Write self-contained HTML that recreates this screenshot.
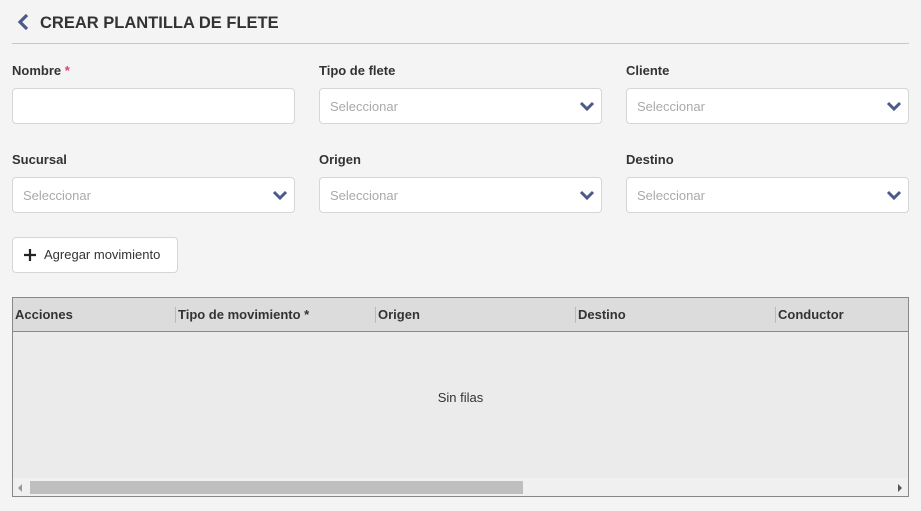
<!DOCTYPE html>
<html><head><style>
body{margin:0;width:921px;height:511px;background:#f4f4f4;font-family:"Liberation Sans",sans-serif;position:relative;overflow:hidden}
.a{position:absolute}
.t{left:40px;top:12px;font-size:16.5px;font-weight:bold;color:#333;line-height:22px}
.hr{left:12px;top:43px;width:897px;height:1px;background:#c8c8c8}
.lbl{font-size:13px;font-weight:bold;color:#333}
.in{background:#fff;border:1px solid #d6d6d6;border-radius:4px;height:34px;width:281px;box-sizing:content-box}
.in span{position:absolute;left:10px;top:10px;font-size:13px;color:#aaa}
.in svg{position:absolute;right:6px;top:11px}
.btn{left:12px;top:237px;width:164px;height:34px;background:#fff;border:1px solid #d6d6d6;border-radius:4px;font-size:13px;color:#333}
.tbl{left:12px;top:297px;width:895px;height:198px;border:1px solid #888;background:#ebebeb}
.th{left:0;top:0;width:895px;height:33px;background:#dcdcdc;border-bottom:1px solid #888}
.th div{position:absolute;top:9px;font-size:13px;font-weight:bold;color:#333;padding-left:2px;border-left:1px solid #bbb;height:16px;line-height:16px}
</style></head><body>
<svg class="a" style="left:16px;top:13px" width="14" height="18"><path d="M11 2 L4 9 L11 16" stroke="#4a5a8a" stroke-width="3.2" fill="none"/></svg>
<div class="a t">CREAR PLANTILLA DE FLETE</div>
<div class="a hr"></div>
<div class="a lbl" style="left:12px;top:63px">Nombre <span style="color:#e0407a">*</span></div>
<div class="a lbl" style="left:319px;top:63px">Tipo de flete</div>
<div class="a lbl" style="left:626px;top:63px">Cliente</div>
<div class="a lbl" style="left:12px;top:152px">Sucursal</div>
<div class="a lbl" style="left:319px;top:152px">Origen</div>
<div class="a lbl" style="left:626px;top:152px">Destino</div>
<div class="a in" style="left:12px;top:88px"></div>
<div class="a in" style="left:319px;top:88px"><span>Seleccionar</span><svg width="16" height="12"><path d="M2 3 L8 9 L14 3" stroke="#4a5a8a" stroke-width="3" fill="none"/></svg></div>
<div class="a in" style="left:626px;top:88px"><span>Seleccionar</span><svg width="16" height="12"><path d="M2 3 L8 9 L14 3" stroke="#4a5a8a" stroke-width="3" fill="none"/></svg></div>
<div class="a in" style="left:12px;top:177px"><span>Seleccionar</span><svg width="16" height="12"><path d="M2 3 L8 9 L14 3" stroke="#4a5a8a" stroke-width="3" fill="none"/></svg></div>
<div class="a in" style="left:319px;top:177px"><span>Seleccionar</span><svg width="16" height="12"><path d="M2 3 L8 9 L14 3" stroke="#4a5a8a" stroke-width="3" fill="none"/></svg></div>
<div class="a in" style="left:626px;top:177px"><span>Seleccionar</span><svg width="16" height="12"><path d="M2 3 L8 9 L14 3" stroke="#4a5a8a" stroke-width="3" fill="none"/></svg></div>
<div class="a btn"><svg class="a" style="left:11px;top:11px" width="12" height="12"><path d="M6 0V12M0 6H12" stroke="#222" stroke-width="2.2"/></svg><span class="a" style="left:31px;top:9px">Agregar movimiento</span></div>
<div class="a tbl">
<div class="a th">
<div style="left:0;border-left:none">Acciones</div>
<div style="left:162px">Tipo de movimiento *</div>
<div style="left:362px">Origen</div>
<div style="left:562px">Destino</div>
<div style="left:762px">Conductor</div>
</div>
<div class="a" style="left:0;top:92px;width:895px;text-align:center;font-size:13px;color:#333">Sin filas</div>
<div class="a" style="left:0;top:180px;width:895px;height:18px;background:#f0f0f0"></div>
<div class="a" style="left:17px;top:183px;width:493px;height:13px;background:#bfbfbf"></div>
<svg class="a" style="left:5px;top:186px" width="5" height="8"><path d="M4 0L0 4L4 8Z" fill="#999"/></svg>
<svg class="a" style="left:885px;top:186px" width="5" height="8"><path d="M0 0L4 4L0 8Z" fill="#555"/></svg>
</div>
</body></html>
